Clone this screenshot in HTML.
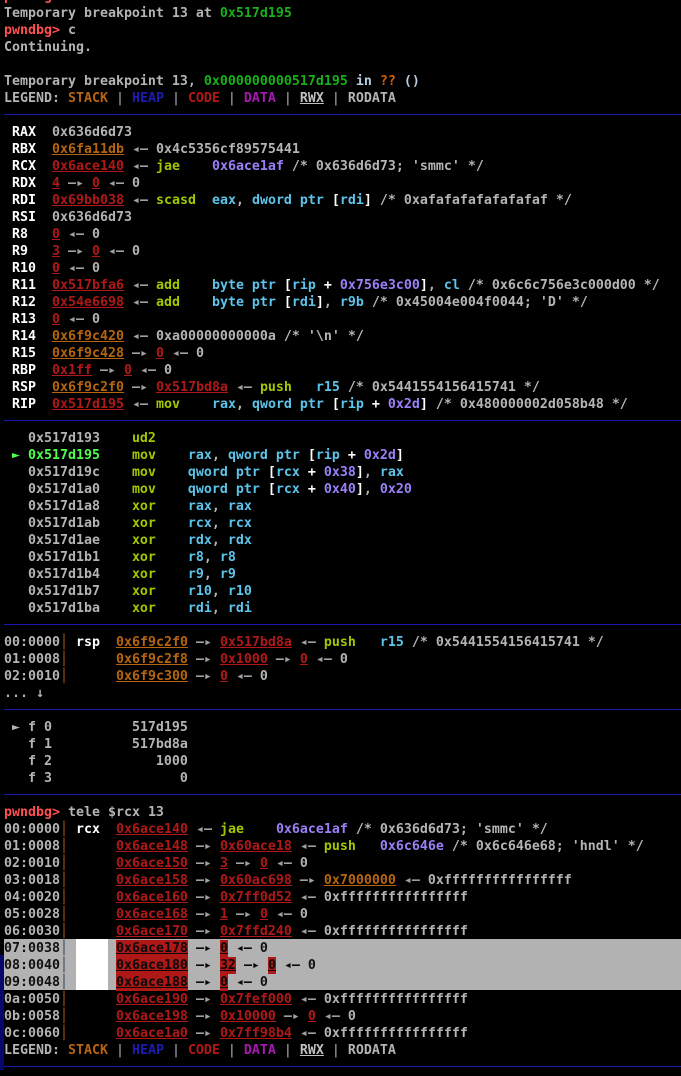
<!DOCTYPE html>
<html><head><meta charset="utf-8"><style>
html,body{margin:0;padding:0;background:#000;width:681px;height:1070px;overflow:hidden}
#t{position:absolute;left:0;top:-12px;width:681px;font:bold 13.29px/17px "DejaVu Sans Mono","Liberation Mono",monospace;color:#b4b4b4;z-index:2}
#t div{height:17px;padding-left:4px;position:relative;white-space:pre}
#t div.h::after{content:"";position:absolute;left:4px;right:0;top:7px;height:1px;background:#1717b0}
.o{color:#b5650f;text-decoration:underline}.r{color:#b01818;text-decoration:underline}
.O{color:#b5650f}.B{color:#1c1cb4}.R{color:#b01818}.M{color:#a818b0}.U{text-decoration:underline;color:#c0c0c0}.s{font-weight:normal}
.y{color:#a0c800}.c{color:#5cc4ea}.p{color:#9a80f8}.w{color:#fff}.g{color:#18b018}.G{color:#50ff50}.e{color:#ff5050}.a{color:#a0a0a0}.v{color:#a85c10;font-weight:normal}
.q{color:#d0600c}.i{color:#b8cce0}
.k{color:#101010}.x{display:inline-block;height:17px;background:#b01818;color:#0a0a0a;text-decoration:underline}.k .a{color:#0a0a0a}.k .v{color:#345}
#sel{position:absolute;left:4px;right:0;top:939px;height:51px;background:#b2b2b2;z-index:1}
#wh{position:absolute;left:76px;width:32px;top:939px;height:51px;background:#fff;z-index:1}
#st{position:absolute;left:0;width:4px;top:955px;height:115px;background:#08086c}
</style></head><body>
<div id="st"></div><div id="sel"></div><div id="wh"></div>
<div id="t">
<div><span class="e">pwndbg&gt;</span></div>
<div>Temporary breakpoint 13 at <span class="g">0x517d195</span></div>
<div><span class="e">pwndbg&gt;</span> c</div>
<div>Continuing.</div>
<div></div>
<div>Temporary breakpoint 13, <span class="g">0x000000000517d195</span> <span class="i">in</span> <span class="q">??</span> <span class="i">()</span></div>
<div>LEGEND: <span class="O">STACK</span> <span class="s">|</span> <span class="B">HEAP</span> <span class="s">|</span> <span class="R">CODE</span> <span class="s">|</span> <span class="M">DATA</span> <span class="s">|</span> <span class="U">RWX</span> <span class="s">|</span> RODATA</div>
<div class="h"></div>
<div> <span class="w">RAX</span>  0x636d6d73</div>
<div> <span class="w">RBX</span>  <span class="o">0x6fa11db</span> <span class="a">◂—</span> 0x4c5356cf89575441</div>
<div> <span class="w">RCX</span>  <span class="r">0x6ace140</span> <span class="a">◂—</span> <span class="y">jae</span>    <span class="p">0x6ace1af</span> /* 0x636d6d73; 'smmc' */</div>
<div> <span class="w">RDX</span>  <span class="r">4</span> <span class="a">—▸</span> <span class="r">0</span> <span class="a">◂—</span> 0</div>
<div> <span class="w">RDI</span>  <span class="r">0x69bb038</span> <span class="a">◂—</span> <span class="y">scasd</span>  <span class="c">eax</span>, <span class="c">dword ptr</span> <span class="w">[</span><span class="c">rdi</span><span class="w">]</span> /* 0xafafafafafafafaf */</div>
<div> <span class="w">RSI</span>  0x636d6d73</div>
<div> <span class="w">R8 </span>  <span class="r">0</span> <span class="a">◂—</span> 0</div>
<div> <span class="w">R9 </span>  <span class="r">3</span> <span class="a">—▸</span> <span class="r">0</span> <span class="a">◂—</span> 0</div>
<div> <span class="w">R10</span>  <span class="r">0</span> <span class="a">◂—</span> 0</div>
<div> <span class="w">R11</span>  <span class="r">0x517bfa6</span> <span class="a">◂—</span> <span class="y">add</span>    <span class="c">byte ptr</span> <span class="w">[</span><span class="c">rip</span> <span class="w">+</span> <span class="p">0x756e3c00</span><span class="w">]</span>, <span class="c">cl</span> /* 0x6c6c756e3c000d00 */</div>
<div> <span class="w">R12</span>  <span class="r">0x54e6698</span> <span class="a">◂—</span> <span class="y">add</span>    <span class="c">byte ptr</span> <span class="w">[</span><span class="c">rdi</span><span class="w">]</span>, <span class="c">r9b</span> /* 0x45004e004f0044; 'D' */</div>
<div> <span class="w">R13</span>  <span class="r">0</span> <span class="a">◂—</span> 0</div>
<div> <span class="w">R14</span>  <span class="o">0x6f9c420</span> <span class="a">◂—</span> 0xa00000000000a /* '\n' */</div>
<div> <span class="w">R15</span>  <span class="o">0x6f9c428</span> <span class="a">—▸</span> <span class="r">0</span> <span class="a">◂—</span> 0</div>
<div> <span class="w">RBP</span>  <span class="r">0x1ff</span> <span class="a">—▸</span> <span class="r">0</span> <span class="a">◂—</span> 0</div>
<div> <span class="w">RSP</span>  <span class="o">0x6f9c2f0</span> <span class="a">—▸</span> <span class="r">0x517bd8a</span> <span class="a">◂—</span> <span class="y">push</span>   <span class="c">r15</span> /* 0x5441554156415741 */</div>
<div> <span class="w">RIP</span>  <span class="r">0x517d195</span> <span class="a">◂—</span> <span class="y">mov</span>    <span class="c">rax</span>, <span class="c">qword ptr</span> <span class="w">[</span><span class="c">rip</span> <span class="w">+</span> <span class="p">0x2d</span><span class="w">]</span> /* 0x480000002d058b48 */</div>
<div class="h"></div>
<div>   0x517d193    <span class="y">ud2</span></div>
<div> <span class="G">►</span> <span class="G">0x517d195</span>    <span class="y">mov</span>    <span class="c">rax</span>, <span class="c">qword ptr</span> <span class="w">[</span><span class="c">rip</span> <span class="w">+</span> <span class="p">0x2d</span><span class="w">]</span></div>
<div>   0x517d19c    <span class="y">mov</span>    <span class="c">qword ptr</span> <span class="w">[</span><span class="c">rcx</span> <span class="w">+</span> <span class="p">0x38</span><span class="w">]</span>, <span class="c">rax</span></div>
<div>   0x517d1a0    <span class="y">mov</span>    <span class="c">qword ptr</span> <span class="w">[</span><span class="c">rcx</span> <span class="w">+</span> <span class="p">0x40</span><span class="w">]</span>, <span class="p">0x20</span></div>
<div>   0x517d1a8    <span class="y">xor</span>    <span class="c">rax</span>, <span class="c">rax</span></div>
<div>   0x517d1ab    <span class="y">xor</span>    <span class="c">rcx</span>, <span class="c">rcx</span></div>
<div>   0x517d1ae    <span class="y">xor</span>    <span class="c">rdx</span>, <span class="c">rdx</span></div>
<div>   0x517d1b1    <span class="y">xor</span>    <span class="c">r8</span>, <span class="c">r8</span></div>
<div>   0x517d1b4    <span class="y">xor</span>    <span class="c">r9</span>, <span class="c">r9</span></div>
<div>   0x517d1b7    <span class="y">xor</span>    <span class="c">r10</span>, <span class="c">r10</span></div>
<div>   0x517d1ba    <span class="y">xor</span>    <span class="c">rdi</span>, <span class="c">rdi</span></div>
<div class="h"></div>
<div>00:0000<span class="v">│</span> <span class="w">rsp</span>  <span class="o">0x6f9c2f0</span> <span class="a">—▸</span> <span class="r">0x517bd8a</span> <span class="a">◂—</span> <span class="y">push</span>   <span class="c">r15</span> /* 0x5441554156415741 */</div>
<div>01:0008<span class="v">│</span>      <span class="o">0x6f9c2f8</span> <span class="a">—▸</span> <span class="r">0x1000</span> <span class="a">—▸</span> <span class="r">0</span> <span class="a">◂—</span> 0</div>
<div>02:0010<span class="v">│</span>      <span class="o">0x6f9c300</span> <span class="a">—▸</span> <span class="r">0</span> <span class="a">◂—</span> 0</div>
<div>... ↓</div>
<div class="h"></div>
<div> <span>►</span> f 0          517d195</div>
<div>   f 1          517bd8a</div>
<div>   f 2             1000</div>
<div>   f 3                0</div>
<div class="h"></div>
<div><span class="e">pwndbg&gt;</span> tele $rcx 13</div>
<div>00:0000<span class="v">│</span> <span class="w">rcx</span>  <span class="r">0x6ace140</span> <span class="a">◂—</span> <span class="y">jae</span>    <span class="p">0x6ace1af</span> /* 0x636d6d73; 'smmc' */</div>
<div>01:0008<span class="v">│</span>      <span class="r">0x6ace148</span> <span class="a">—▸</span> <span class="r">0x60ace18</span> <span class="a">◂—</span> <span class="y">push</span>   <span class="p">0x6c646e</span> /* 0x6c646e68; 'hndl' */</div>
<div>02:0010<span class="v">│</span>      <span class="r">0x6ace150</span> <span class="a">—▸</span> <span class="r">3</span> <span class="a">—▸</span> <span class="r">0</span> <span class="a">◂—</span> 0</div>
<div>03:0018<span class="v">│</span>      <span class="r">0x6ace158</span> <span class="a">—▸</span> <span class="r">0x60ac698</span> <span class="a">—▸</span> <span class="o">0x7000000</span> <span class="a">◂—</span> 0xffffffffffffffff</div>
<div>04:0020<span class="v">│</span>      <span class="r">0x6ace160</span> <span class="a">—▸</span> <span class="r">0x7ff0d52</span> <span class="a">◂—</span> 0xffffffffffffffff</div>
<div>05:0028<span class="v">│</span>      <span class="r">0x6ace168</span> <span class="a">—▸</span> <span class="r">1</span> <span class="a">—▸</span> <span class="r">0</span> <span class="a">◂—</span> 0</div>
<div>06:0030<span class="v">│</span>      <span class="r">0x6ace170</span> <span class="a">—▸</span> <span class="r">0x7ffd240</span> <span class="a">◂—</span> 0xffffffffffffffff</div>
<div class="k">07:0038<span class="v">│</span>      <span class="x">0x6ace178</span> <span class="a">—▸</span> <span class="x">0</span> <span class="a">◂—</span> 0</div>
<div class="k">08:0040<span class="v">│</span>      <span class="x">0x6ace180</span> <span class="a">—▸</span> <span class="x">32</span> <span class="a">—▸</span> <span class="x">0</span> <span class="a">◂—</span> 0</div>
<div class="k">09:0048<span class="v">│</span>      <span class="x">0x6ace188</span> <span class="a">—▸</span> <span class="x">0</span> <span class="a">◂—</span> 0</div>
<div>0a:0050<span class="v">│</span>      <span class="r">0x6ace190</span> <span class="a">—▸</span> <span class="r">0x7fef000</span> <span class="a">◂—</span> 0xffffffffffffffff</div>
<div>0b:0058<span class="v">│</span>      <span class="r">0x6ace198</span> <span class="a">—▸</span> <span class="r">0x10000</span> <span class="a">—▸</span> <span class="r">0</span> <span class="a">◂—</span> 0</div>
<div>0c:0060<span class="v">│</span>      <span class="r">0x6ace1a0</span> <span class="a">—▸</span> <span class="r">0x7ff98b4</span> <span class="a">◂—</span> 0xffffffffffffffff</div>
<div>LEGEND: <span class="O">STACK</span> <span class="s">|</span> <span class="B">HEAP</span> <span class="s">|</span> <span class="R">CODE</span> <span class="s">|</span> <span class="M">DATA</span> <span class="s">|</span> <span class="U">RWX</span> <span class="s">|</span> RODATA</div>
<div class="h"></div>
</div>
</body></html>
